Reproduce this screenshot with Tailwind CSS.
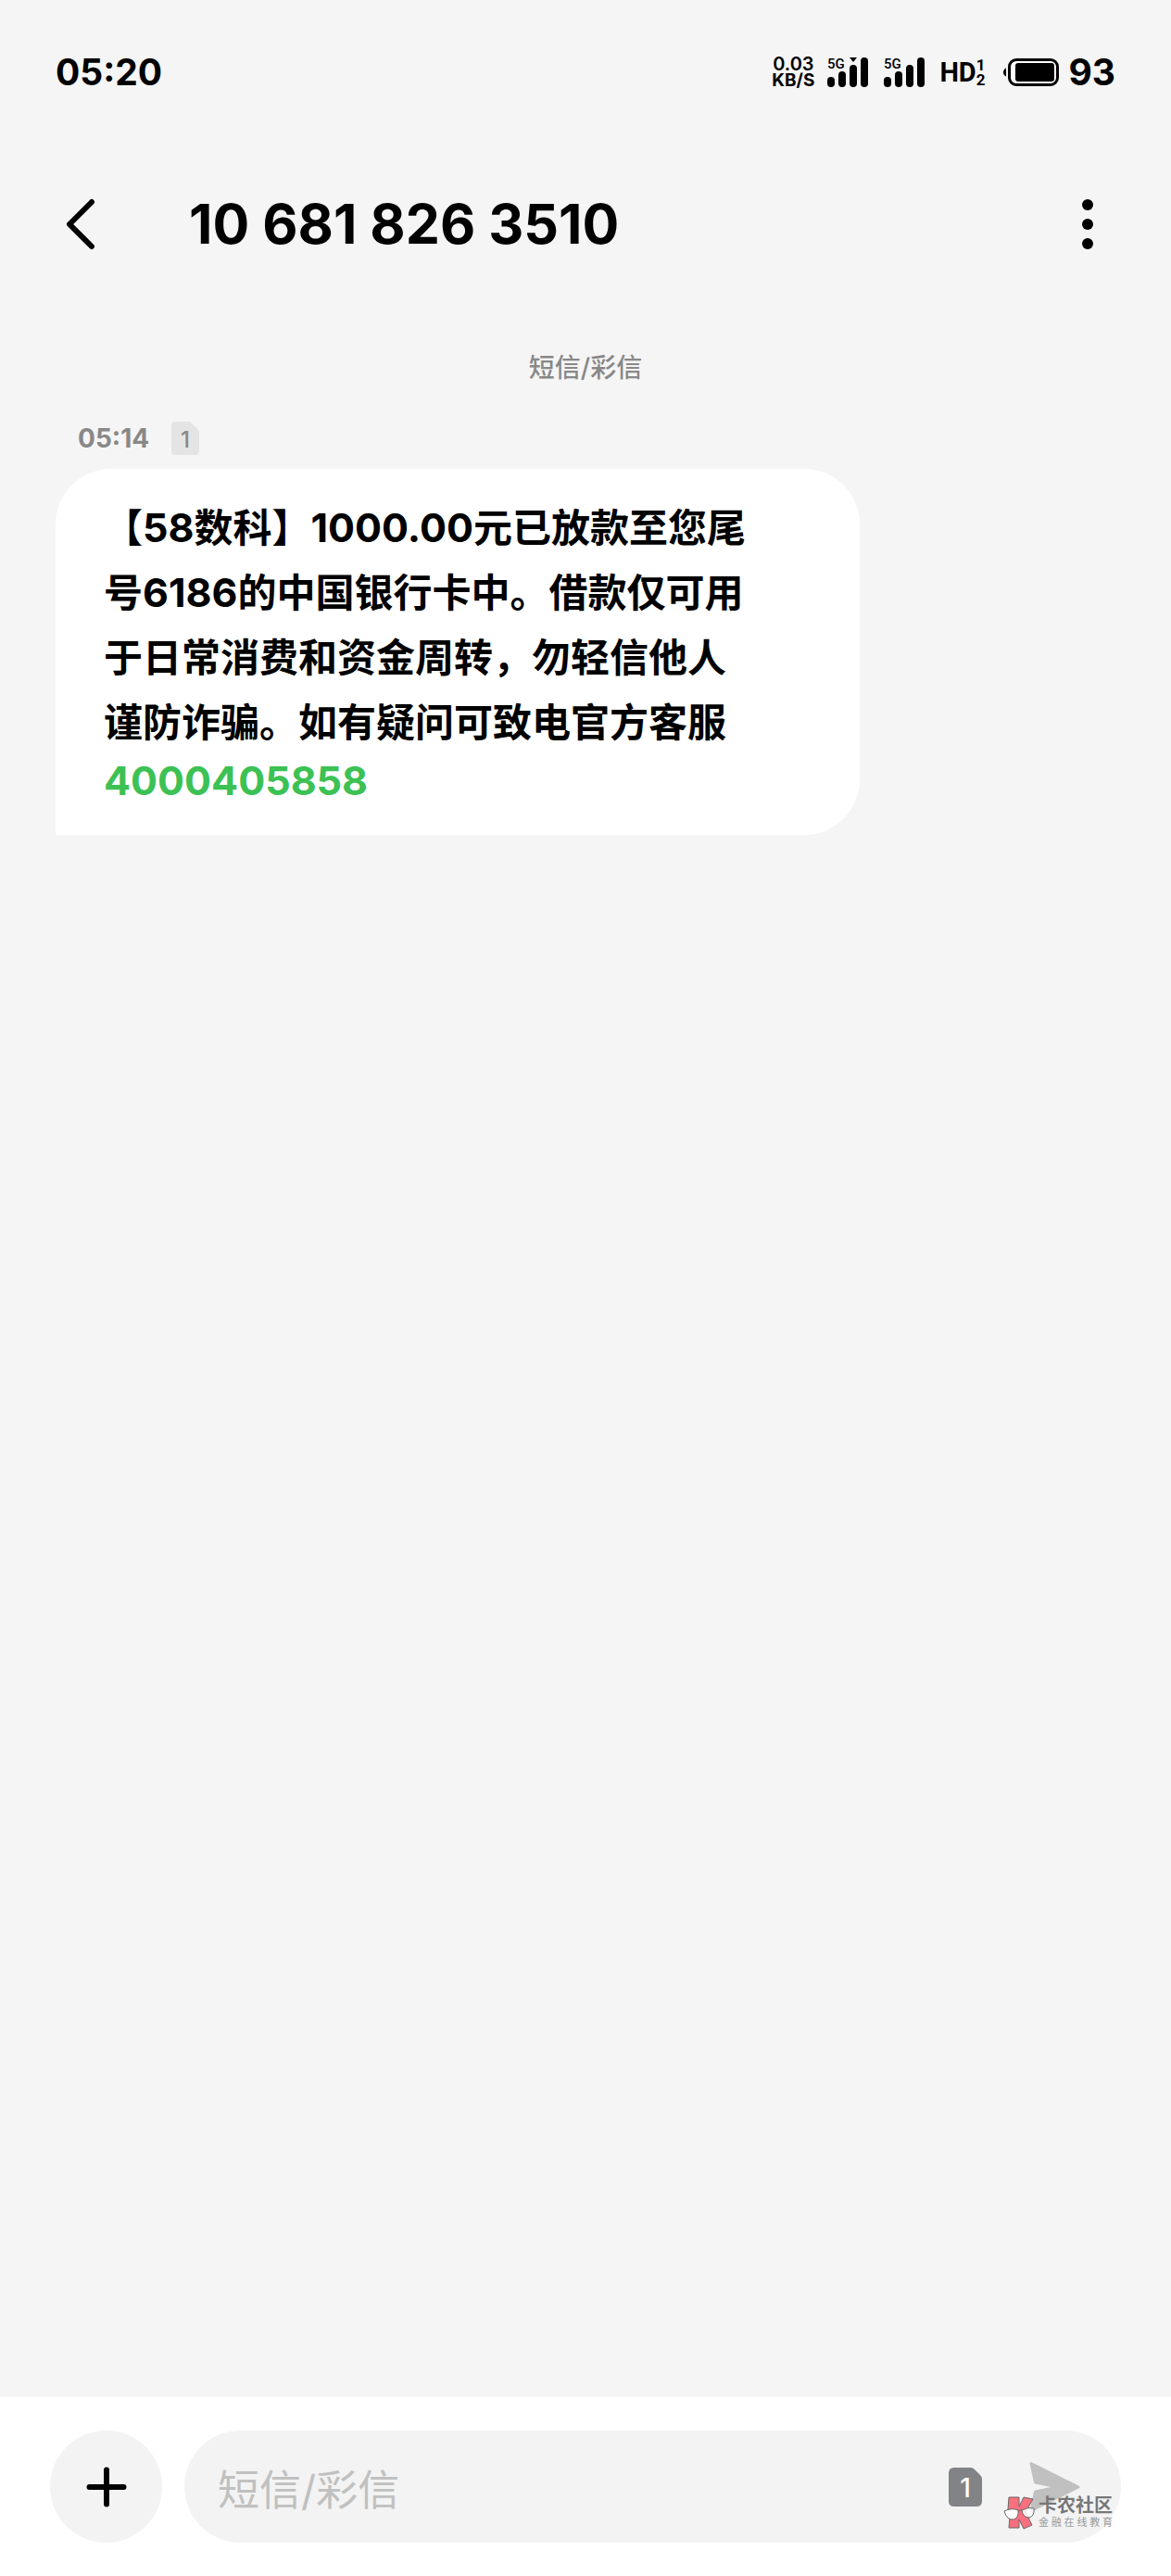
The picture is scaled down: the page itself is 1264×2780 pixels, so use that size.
<!DOCTYPE html>
<html lang="zh-CN">
  <head>
    <meta charset="utf-8">
    <meta name="viewport" content="width=device-width, initial-scale=1">
    <title>10 681 826 3510</title>
    <script src="https://cdn.jsdelivr.net/npm/@tailwindcss/browser@4"></script>
  </head>
  <body class="bg-[#f5f5f5] text-black font-[Inter,'Noto_Sans_CJK_SC',sans-serif]">
    <div class="min-h-screen flex flex-col">

      <!-- status bar -->
      <div class="flex items-center justify-between h-[156px] px-[60px]">
        <div class="text-[39px] leading-[48px] font-bold">05:20</div>
        <div class="flex items-center">
          <div class="flex flex-col items-center mr-[14px]">
            <span class="text-[20px] leading-[18px] font-semibold">0.03</span>
            <span class="text-[19px] leading-[18px] font-bold">KB/S</span>
          </div>
          <svg class="w-11 h-8 mr-[17px] overflow-visible" viewBox="0 0 44 32">
            <text x="0" y="12" font-family="Roboto, sans-serif" font-size="15" font-weight="500">5G</text>
            <rect x="0" y="21" width="8" height="11" rx="4"/>
            <rect x="12" y="15" width="8" height="17" rx="4"/>
            <rect x="24" y="8" width="8" height="24" rx="4"/>
            <rect x="36" y="0" width="8" height="32" rx="4"/>
            <path d="M24 0h8l-4 5z"/>
          </svg>
          <svg class="w-11 h-8 mr-4 overflow-visible" viewBox="0 0 44 32">
            <text x="0" y="12" font-family="Roboto, sans-serif" font-size="15" font-weight="500">5G</text>
            <rect x="0" y="21" width="8" height="11" rx="4"/>
            <rect x="12" y="15" width="8" height="17" rx="4"/>
            <rect x="24" y="8" width="8" height="24" rx="4"/>
            <rect x="36" y="0" width="8" height="32" rx="4"/>
          </svg>
          <div class="flex items-center mr-5 font-[Roboto,sans-serif]">
            <span class="text-[29px] leading-8 font-bold">HD</span>
            <span class="flex flex-col text-[17px] leading-4 font-bold">
              <span>1</span>
              <span>2</span>
            </span>
          </div>
          <svg class="w-[60px] h-[30px] mr-[10px]" viewBox="0 0 60 30">
            <path d="M3 10.500Q0 12 0 15T3 19.500z"/>
            <rect x="6.500" y="1.500" width="52" height="27" rx="7.500" fill="#fff" stroke="#000" stroke-width="3"/>
            <rect x="13" y="5" width="42" height="20" rx="3"/>
          </svg>
          <span class="text-[39px] leading-[48px] font-bold">93</span>
        </div>
      </div>

      <!-- title bar -->
      <header class="flex items-center h-[172px] pl-[70px] pr-[60px]">
        <button type="button" aria-label="返回" class="w-[134px]">
          <svg class="w-9 h-14" viewBox="0 0 36 56" fill="none" stroke="#000" stroke-width="6" stroke-linecap="round" stroke-linejoin="round">
            <path d="M29 4L5 28L29 52"/>
          </svg>
        </button>
        <h1 class="grow text-[59px] leading-[72px] font-bold">10 681 826 3510</h1>
        <button type="button" aria-label="更多" class="w-[60px] flex justify-center">
          <svg class="w-3 h-14" viewBox="0 0 12 56">
            <circle cx="6" cy="7" r="6"/>
            <circle cx="6" cy="28" r="6"/>
            <circle cx="6" cy="49" r="6"/>
          </svg>
        </button>
      </header>

      <!-- conversation -->
      <main class="grow px-[60px] pt-[49px]">
        <p class="text-center text-[28px] leading-10 font-medium text-[#888]">短信/彩信</p>
        <div class="flex items-center h-9 mt-[38px] pl-6 text-[#888]">
          <time class="text-[28px] leading-9 font-bold">05:14</time>
          <svg class="w-[30px] h-9 ml-6" viewBox="0 0 30 36">
            <path d="M4 0H20L30 10V32Q30 36 26 36H4Q0 36 0 32V4Q0 0 4 0z" fill="#e4e4e5"/>
            <text x="15" y="28" text-anchor="middle" font-family="Inter, sans-serif" font-size="24" font-weight="500" fill="#888">1</text>
          </svg>
        </div>
        <div class="mt-[15px] w-fit bg-white rounded-[60px] rounded-bl-none pt-[29px] pb-8 pl-[52px] pr-[108px]">
          <p class="max-w-[708px] text-[42px] leading-[70px] font-bold">【<span class="text-[43px] leading-none">58</span>数科】<span class="text-[43px] leading-none">1000.00</span>元已放款至您尾号<span class="text-[43px] leading-none">6186</span>的中国银行卡中。借款仅可用于日常消费和资金周转，勿轻信他人谨防诈骗。如有疑问可致电官方客服
            <a href="tel:4000405858" class="block text-[43px] leading-[54px] text-[#3cc154]">4000405858</a>
          </p>
        </div>
      </main>

      <!-- composer -->
      <footer class="flex gap-6 bg-white py-9 px-[54px]">
        <button type="button" aria-label="添加" class="shrink-0 size-[121px] rounded-full bg-[#f3f3f3] flex items-center justify-center">
          <svg class="size-11" viewBox="0 0 44 44" stroke="#000" stroke-width="6" stroke-linecap="round">
            <path d="M22 3.500V40.500M3.500 22H40.500"/>
          </svg>
        </button>
        <div class="relative grow flex items-center h-[121px] rounded-full bg-[#f3f3f3] pl-9 pr-[44px]">
          <input type="text" aria-label="短信/彩信" placeholder="短信/彩信" class="grow min-w-0 h-full pt-2 text-[45px] bg-transparent outline-none placeholder:text-[#c0c0c0]">
          <button type="button" aria-label="SIM 1" class="shrink-0 mr-[50px]">
            <svg class="w-9 h-[42px]" viewBox="0 0 36 42">
              <path d="M6 0H24Q26 0 28 2L34 8Q36 10 36 12V36Q36 42 30 42H6Q0 42 0 36V6Q0 0 6 0z" fill="#828387"/>
              <text x="18" y="32" text-anchor="middle" font-family="Inter, sans-serif" font-size="28" font-weight="500" fill="#fff">1</text>
            </svg>
          </button>
          <button type="button" aria-label="发送" class="shrink-0">
            <svg class="w-14 h-[56px]" viewBox="0 0 56 56" fill="#c0c0c0" stroke="#c0c0c0" stroke-width="3" stroke-linejoin="round">
              <path d="M3 2.500L54 28L3 53.500L7.500 33L32 28L7.500 23z"/>
            </svg>
          </button>

          <!-- community mark over the send button -->
          <div class="absolute right-[9px] bottom-[14px] flex items-center gap-1 text-[#777]">
            <svg class="w-[34px] h-9" viewBox="0 0 34 36" stroke="#666" stroke-width="1" stroke-linejoin="round">
              <path d="M6 1H17V11L22 1L32 3L24 17L31 31L22 35L17 25V34H6L7 22L5 14z" fill="#f8707f"/>
              <path d="M1 16Q9 12 16 15Q17 23 11 25Q4 26 1 16z" fill="#fff"/>
              <path d="M20 15Q27 11 33 13Q34 21 28 23Q21 23 20 15z" fill="#fff" fill-opacity=".85"/>
              <path d="M16 16Q18 14 20 15" fill="none"/>
            </svg>
            <div class="w-20">
              <div class="text-[20px] leading-5 font-bold">卡农社区</div>
              <div class="text-[11px] leading-4 text-[#999] [text-align-last:justify]">金融在线教育</div>
            </div>
          </div>
        </div>
      </footer>
    </div>
  </body>
</html>
